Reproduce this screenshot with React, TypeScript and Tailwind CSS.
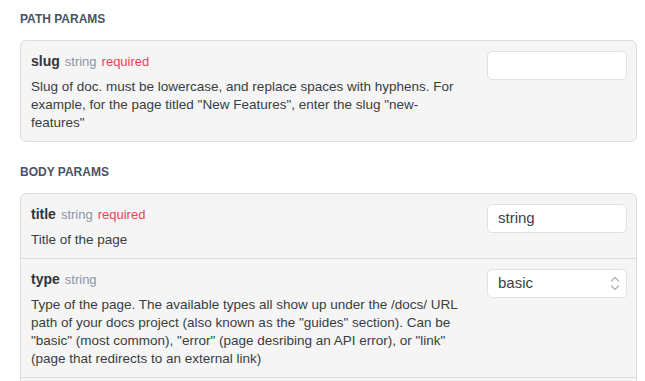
import React from 'react';

type Param = {
  name: string;
  type: string;
  required?: boolean;
  description: string;
  control: 'input' | 'select';
  value?: string;
};

const pathParams: Param[] = [
  {
    name: 'slug',
    type: 'string',
    required: true,
    description:
      'Slug of doc. must be lowercase, and replace spaces with hyphens. For example, for the page titled "New Features", enter the slug "new-features"',
    control: 'input',
  },
];

const bodyParams: Param[] = [
  {
    name: 'title',
    type: 'string',
    required: true,
    description: 'Title of the page',
    control: 'input',
    value: 'string',
  },
  {
    name: 'type',
    type: 'string',
    description:
      'Type of the page. The available types all show up under the /docs/ URL path of your docs project (also known as the "guides" section). Can be "basic" (most common), "error" (page desribing an API error), or "link" (page that redirects to an external link)',
    control: 'select',
    value: 'basic',
  },
];

const Chevrons: React.FC = () => (
  <svg width="10" height="15" viewBox="0 0 10 15" fill="none" stroke="#b4b4b4" strokeWidth="1.4" strokeLinecap="round" strokeLinejoin="round">
    <path d="M1.5 5 L5 1.5 L8.5 5" />
    <path d="M1.5 10 L5 13.5 L8.5 10" />
  </svg>
);

const Row: React.FC<{ p: Param; divider: boolean }> = ({ p, divider }) => (
  <div className={`flex pl-[10px] pr-[9px] pt-[10px] pb-[9px] ${divider ? 'border-b border-[#dcdcdc]' : ''}`}>
    <div className="flex-1 pr-[26px]">
      <div className="flex items-baseline gap-[5px] h-5 leading-5">
        <span className="text-[14px] font-bold text-[#2f343a]">{p.name}</span>
        <span className="text-[13px] text-[#8c95a8]">{p.type}</span>
        {p.required && <span className="text-[13px] text-[#ef4258]">required</span>}
      </div>
      <p className="mt-[7px] text-[13.5px] leading-[18px] text-[#383d43]">{p.description}</p>
    </div>
    <div className="w-[140px] h-[29px] shrink-0 bg-white border border-[#e1e1e1] rounded-[5px] flex items-center pl-[10px] pr-[6px] justify-between">
      <span className="text-[15px] text-[#3a414a]">{p.value ?? ''}</span>
      {p.control === 'select' && <Chevrons />}
    </div>
  </div>
);

const Section: React.FC<{ title: string; params: Param[]; first?: boolean; more?: boolean }> = ({ title, params, first, more }) => (
  <section className={first ? '' : 'mt-[22px]'}>
    <h3 className="text-[12px] leading-4 font-bold uppercase text-[#4a5363] mb-[13px]">{title}</h3>
    <div className="bg-[#f5f5f5] border border-[#dcdcdc] rounded-[6px]">
      {params.map((p, i) => (
        <Row key={p.name} p={p} divider={i < params.length - 1 || !!more} />
      ))}
      {more && <div className="h-10" />}
    </div>
  </section>
);

const App: React.FC = () => {
  return (
    <div className="h-screen overflow-hidden bg-white pl-5 pr-2 pt-[11px]" style={{ fontFamily: '"Liberation Sans", Arial, sans-serif' }}>
      <Section title="Path Params" params={pathParams} first />
      <Section title="Body Params" params={bodyParams} more />
    </div>
  );
};

export default App;
